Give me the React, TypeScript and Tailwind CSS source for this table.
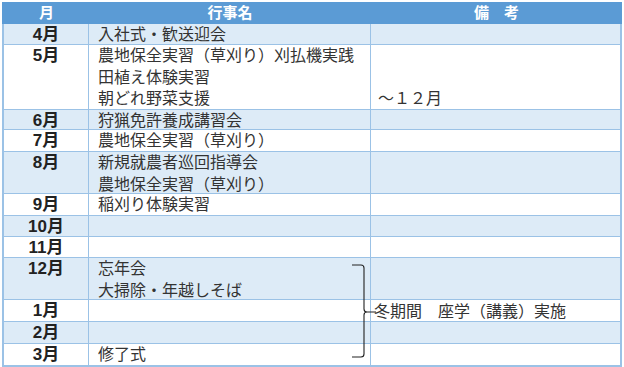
const rows = [
  { m: "4月", h: "h-[21px]", ev: ["入社式・歓送迎会"], note: [] as string[], shade: true },
  { m: "5月", h: "h-[65px]", ev: ["農地保全実習（草刈り）刈払機実践", "田植え体験実習", "朝どれ野菜支援"], note: ["", "", "～１２月"], shade: false },
  { m: "6月", h: "h-[20px]", ev: ["狩猟免許養成講習会"], note: [], shade: true },
  { m: "7月", h: "h-[22px]", ev: ["農地保全実習（草刈り）"], note: [], shade: false },
  { m: "8月", h: "h-[42px]", ev: ["新規就農者巡回指導会", "農地保全実習（草刈り）"], note: [], shade: true },
  { m: "9月", h: "h-[22px]", ev: ["稲刈り体験実習"], note: [], shade: false },
  { m: "10月", h: "h-[21px]", ev: [], note: [], shade: true },
  { m: "11月", h: "h-[21px]", ev: [], note: [], shade: false },
  { m: "12月", h: "h-[42px]", ev: ["忘年会", "大掃除・年越しそば"], note: [], shade: true },
  { m: "1月", h: "h-[22px]", ev: [], note: ["冬期間　座学（講義）実施"], shade: false, winter: true },
  { m: "2月", h: "h-[22px]", ev: [], note: [], shade: true },
  { m: "3月", h: "h-[21px]", ev: ["修了式"], note: [], shade: false },
];

export default function App() {
  return (
    <div
      className="relative w-[624px] h-[367px] bg-white p-[2px]"
      style={{ fontFamily: '"Liberation Sans", "Noto Sans CJK JP", sans-serif' }}
    >
      <div className="w-[620px] border-x-2 border-b-2 border-[#9bc2e6]">
        {/* header */}
        <div className="grid grid-cols-[87px_282px_1fr] h-[22px] -mx-[2px] bg-[#5b9bd5] text-white font-bold text-[15px] leading-[22px]">
          <div className="text-center pl-[2px]">月</div>
          <div className="text-center">行事名</div>
          <div className="text-center">備　考</div>
        </div>

        {rows.map((r, i) => (
          <div
            key={i}
            className={`grid grid-cols-[85px_282px_1fr] border-b border-[#9bc2e6] last:border-b-0 text-[16px] leading-[21.5px] ${r.h} ${
              r.shade ? "bg-[#ddebf7]" : "bg-white"
            }`}
          >
            <div className="border-r border-[#9bc2e6] text-center font-bold text-[17px] text-[#222]">{r.m}</div>
            <div className="border-r border-[#9bc2e6] pl-[9px] text-[#333] whitespace-nowrap">
              {r.ev.map((t, j) => (
                <div key={j}>{t}</div>
              ))}
            </div>
            <div className={`${r.winter ? "pl-[3px] pt-[1px]" : "pl-[7px]"} text-[#333] whitespace-nowrap`}>
              {r.note.map((t, j) => (
                <div key={j} className="h-[21.5px]">{t}</div>
              ))}
            </div>
          </div>
        ))}
      </div>

      {/* brace spanning 12月〜3月 */}
      <svg className="absolute left-[348px] top-[261px]" width="32" height="102" viewBox="0 0 32 102" fill="none">
        <path
          d="M4 4 H13 Q16 4 16 7 V48 Q16 51 19 51 H28 M19 51 Q16 51 16 54 V93 Q16 96 13 96 H4"
          stroke="#222"
          strokeWidth="1.1"
        />
      </svg>
    </div>
  );
}
